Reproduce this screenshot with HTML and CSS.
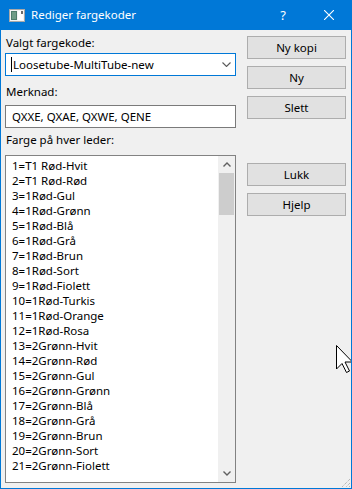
FILE: index.html
```html
<!DOCTYPE html>
<html lang="no">
<head>
  <meta charset="UTF-8" />
  <title>Rediger fargekoder</title>
  <link rel="stylesheet" href="styles.css">
</head>
<body>
  <div class="window">
    <!-- title bar -->
    <div class="titlebar">
      <svg class="app-icon" width="16" height="13" viewBox="0 0 16 13">
        <rect x="0.5" y="0.5" width="15" height="12" fill="#f4f4f4" stroke="#a9a9a9"/>
        <rect x="2" y="2" width="6" height="9" fill="#4f7d6b"/>
        <rect x="3" y="3" width="4" height="7" fill="#6f9c86"/>
        <rect x="9" y="2" width="5" height="9" fill="#ffffff"/>
        <rect x="12" y="2" width="2" height="3" fill="#6c6c6c"/>
      </svg>
      <span class="title">Rediger fargekoder</span>
      <span class="caption-btn">?</span>
      <span class="caption-btn">
        <svg width="10" height="10" viewBox="0 0 10 10">
          <path d="M0 0 L10 10 M10 0 L0 10" stroke="#fff" stroke-width="1.1"/>
        </svg>
      </span>
    </div>

    <div class="client">
      <div class="left">
        <div class="label">Valgt fargekode:</div>
        <div class="combo">
          <span class="caret"></span><span class="combo-text">Loosetube-MultiTube-new</span>
          <svg class="combo-arrow" width="9" height="5" viewBox="0 0 9 5">
            <path d="M0.5 0.5 L4.5 4.5 L8.5 0.5" fill="none" stroke="#5a5a5a" stroke-width="1.1"/>
          </svg>
        </div>

        <div class="label label-gap">Merknad:</div>
        <div class="textbox">QXXE, QXAE, QXWE, QENE</div>

        <div class="label label-small-gap">Farge på hver leder:</div>
        <div class="listbox">
          <ul class="items">
            <li>1=T1 Rød-Hvit</li>
            <li>2=T1 Rød-Rød</li>
            <li>3=1Rød-Gul</li>
            <li>4=1Rød-Grønn</li>
            <li>5=1Rød-Blå</li>
            <li>6=1Rød-Grå</li>
            <li>7=1Rød-Brun</li>
            <li>8=1Rød-Sort</li>
            <li>9=1Rød-Fiolett</li>
            <li>10=1Rød-Turkis</li>
            <li>11=1Rød-Orange</li>
            <li>12=1Rød-Rosa</li>
            <li>13=2Grønn-Hvit</li>
            <li>14=2Grønn-Rød</li>
            <li>15=2Grønn-Gul</li>
            <li>16=2Grønn-Grønn</li>
            <li>17=2Grønn-Blå</li>
            <li>18=2Grønn-Grå</li>
            <li>19=2Grønn-Brun</li>
            <li>20=2Grønn-Sort</li>
            <li>21=2Grønn-Fiolett</li>
          </ul>
          <div class="scrollbar">
            <div class="sb-arrow">
              <svg width="8" height="5" viewBox="0 0 8 5">
                <path d="M0.5 4.5 L4 1 L7.5 4.5" fill="none" stroke="#606060" stroke-width="1.4"/>
              </svg>
            </div>
            <div class="sb-thumb"></div>
            <div class="sb-track"></div>
            <div class="sb-arrow">
              <svg width="8" height="5" viewBox="0 0 8 5">
                <path d="M0.5 0.5 L4 4 L7.5 0.5" fill="none" stroke="#606060" stroke-width="1.4"/>
              </svg>
            </div>
          </div>
        </div>
      </div>

      <div class="right">
        <button class="btn">Ny kopi</button>
        <button class="btn">Ny</button>
        <button class="btn">Slett</button>
        <button class="btn btn-group">Lukk</button>
        <button class="btn">Hjelp</button>
      </div>
    </div>

    <!-- size grip -->
    <svg class="grip" width="11" height="11" viewBox="0 0 11 11">
      <path d="M10 2 L2 10 M10 6 L6 10 M10 9 L9 10" stroke="#a0a0a0" stroke-width="1" stroke-dasharray="1 1"/>
    </svg>

    <!-- mouse pointer -->
    <svg class="pointer" width="18" height="29" viewBox="0 0 18 29">
      <path d="M0.5 0.5 L0.5 24 L6 18.5 L10.5 27.5 L13.5 26 L9 17 L16.5 17 Z" fill="#fff" stroke="#000" stroke-width="1"/>
    </svg>
  </div>
</body>
</html>
```

FILE: styles.css
```css
:root {
  --accent: #0078d7;
  --face: #f0f0f0;
  --btn: #e1e1e1;
  --btn-border: #adadad;
  --field-border: #7a7a7a;
}

* {
  box-sizing: border-box;
}

body {
  margin: 0;
  font-family: "Noto Sans", "DejaVu Sans", sans-serif;
  font-size: 11.5px;
  color: #000;
}

.window {
  position: relative;
  width: 352px;
  height: 489px;
  border: 1px solid var(--accent);
  border-top: none;
  background: var(--face);
  overflow: hidden;
}

/* title bar */
.titlebar {
  height: 30px;
  margin: 0 -1px;
  background: var(--accent);
  color: #fff;
  display: flex;
  align-items: center;
}

.app-icon {
  margin-left: 9px;
  margin-right: 6px;
  flex: none;
}

.title {
  flex: 1;
  font-size: 11.5px;
  line-height: 30px;
}

.caption-btn {
  width: 46px;
  height: 30px;
  display: flex;
  align-items: center;
  justify-content: center;
  font-size: 13px;
}

/* client area */
.client {
  display: flex;
  gap: 11px;
  padding: 5px 5px 0 4px;
}

.left {
  width: 231px;
}

.right {
  width: 99px;
  display: flex;
  flex-direction: column;
  padding-top: 1px;
}

.label {
  line-height: 15px;
  height: 15px;
  padding-left: 1px;
}

.label-gap {
  margin-top: 8px;
}

.label-small-gap {
  margin-top: 4px;
}

.combo {
  margin-top: 3px;
  height: 23px;
  border: 1px solid var(--accent);
  background: #fff;
  display: flex;
  align-items: center;
  padding-left: 5px;
}

.caret {
  width: 1px;
  height: 15px;
  background: #000;
  flex: none;
}

.combo-text {
  flex: 1;
  padding-left: 1px;
}

.combo-arrow {
  margin-right: 4px;
}

.textbox {
  margin-top: 6px;
  height: 23px;
  line-height: 21px;
  border: 1px solid var(--field-border);
  background: #fff;
  padding-left: 6px;
}

.listbox {
  margin-top: 8px;
  height: 328px;
  border: 1px solid #828282;
  background: #fff;
  display: flex;
}

.items {
  flex: 1;
  list-style: none;
  margin: 0;
  padding: 2px 0 0 6px;
}

.items li {
  line-height: 15px;
  height: 15px;
}

.scrollbar {
  width: 17px;
  background: var(--face);
  display: flex;
  flex-direction: column;
}

.sb-arrow {
  height: 17px;
  display: flex;
  align-items: center;
  justify-content: center;
}

.sb-thumb {
  height: 42px;
  margin: 0 1px;
  background: #cdcdcd;
}

.sb-track {
  flex: 1;
}

.btn {
  height: 23px;
  margin: 7px 0 0;
  padding: 0;
  border: 1px solid var(--btn-border);
  background: var(--btn);
  font: inherit;
  color: #000;
}

.btn:first-child {
  margin-top: 0;
}

.btn-group {
  margin-top: 44px;
}

/* overlays */
.grip {
  position: absolute;
  right: 0;
  bottom: 0;
}

.pointer {
  position: absolute;
  left: 335px;
  top: 345px;
}
```
